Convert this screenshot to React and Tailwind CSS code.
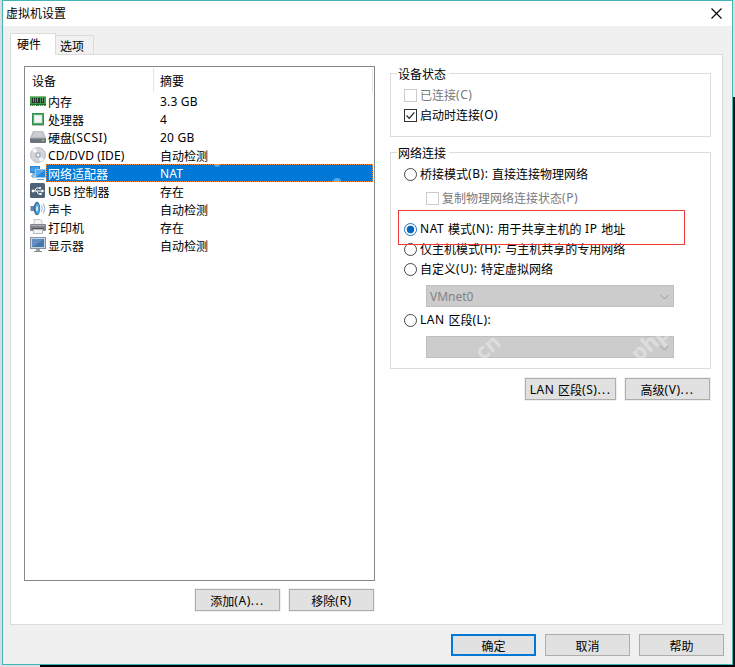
import clsx from 'clsx';

const MemoryIcon = () => (
  <svg className="h-4 w-4" viewBox="0 0 16 16" shapeRendering="crispEdges">
    <rect x="0" y="3" width="16" height="10" fill="#3f9a4a" />
    <rect x="0" y="3" width="16" height="1" fill="#7ec07c" />
    <rect x="2" y="5" width="3" height="5" fill="#26302b" />
    <rect x="6" y="5" width="4" height="5" fill="#26302b" />
    <rect x="11" y="5" width="3" height="5" fill="#26302b" />
    <path d="M3 5h1v4H3zM7 5h1v4H7zM12 5h1v4h-1z" fill="#7d8a82" />
    <rect x="0" y="11" width="16" height="1" fill="#1d6a2c" />
    <path d="M1 12h1v1H1zM3 12h1v1H3zM5 12h1v1H5zM9 12h1v1H9zM11 12h1v1h-1zM13 12h1v1h-1z" fill="#d9e5a0" />
  </svg>
);

const CpuIcon = () => (
  <svg className="h-4 w-4" viewBox="0 0 16 16" shapeRendering="crispEdges">
    <rect x="2" y="2" width="12" height="12" fill="#2f8f4e" />
    <rect x="3" y="3" width="10" height="10" fill="#57ad6c" />
    <rect x="4" y="4" width="8" height="8" fill="#dfe6e1" />
    <rect x="5" y="5" width="6" height="6" fill="#f3f6f4" />
    <rect x="2" y="14" width="12" height="1" fill="#b9c6bd" />
  </svg>
);

const DiskIcon = () => (
  <svg className="h-4 w-4" viewBox="0 0 16 16">
    <path d="M3 2h10l3 7H0z" fill="#b3b7be" />
    <path d="M4 2.500h8l2 5.500H2z" fill="#c9ccd2" />
    <rect x="0" y="9" width="16" height="5" rx="1" fill="#6d737c" />
    <path d="M0 9.500h16" stroke="#90969e" />
    <rect x="12" y="11" width="2" height="1" fill="#8ff06a" />
  </svg>
);

const DiscIcon = () => (
  <svg className="h-4 w-4" viewBox="0 0 16 16">
    <circle cx="8" cy="8" r="7.500" fill="#d3d5d9" stroke="#aeb1b6" strokeWidth="0.800" />
    <path d="M8 8L2 3.400A7 7 0 0 1 6 1.200z" fill="#f7f8fa" />
    <path d="M8 8l6 4.600a7 7 0 0 1-4 2.200z" fill="#f7f8fa" />
    <circle cx="8" cy="8" r="3.200" fill="#b3c0ce" />
    <circle cx="8" cy="8" r="1.700" fill="#ffffff" stroke="#8d949e" strokeWidth="0.600" />
  </svg>
);

const NetworkIcon = () => (
  <svg className="h-4 w-4" viewBox="0 0 16 16">
    <rect x="0" y="1" width="10" height="7" fill="#2f84cc" />
    <rect x="1" y="2" width="8" height="5" fill="#3f9fe8" />
    <path d="M3 8v1h2v1H2v2h3" fill="none" stroke="#5590c4" />
    <rect x="5" y="4" width="11" height="9" fill="#9cc8ee" />
    <rect x="6" y="5" width="9" height="7" fill="#2a86d6" />
    <path d="M6 12V5h9z" fill="#4fa9ee" />
    <path d="M7 14.500h7" stroke="#6f9fc8" />
  </svg>
);

const UsbIcon = () => (
  <svg className="h-4 w-4" viewBox="0 0 16 16">
    <rect x="0" y="0" width="15" height="15" rx="1.500" fill="#4d6277" />
    <path d="M2 8h10M4.500 8l2-3h3M6.500 8l2 3h2" fill="none" stroke="#ffffff" />
    <circle cx="3" cy="8" r="1.400" fill="#ffffff" />
    <path d="M11.500 6.200l3 1.800-3 1.800z" fill="#ffffff" />
    <circle cx="10" cy="5" r="1.100" fill="#ffffff" />
    <rect x="9.500" y="10" width="2" height="2" fill="#ffffff" />
  </svg>
);

const SoundIcon = () => (
  <svg className="h-4 w-4" viewBox="0 0 16 16">
    <path d="M0.500 5h3L8 1v13l-4.500-4h-3z" fill="#5f83ab" />
    <ellipse cx="7" cy="7.500" rx="3.200" ry="6.800" fill="#3a6795" />
    <ellipse cx="7.400" cy="7.500" rx="2.200" ry="5.500" fill="#4ba3e2" />
    <ellipse cx="7" cy="7.500" rx="1.100" ry="2.800" fill="#c8e6fa" />
    <path d="M11.500 4.500q1.800 3 0 6M13.300 2.500q3 5 0 10" fill="none" stroke="#93afca" />
  </svg>
);

const PrinterIcon = () => (
  <svg className="h-4 w-4" viewBox="0 0 16 16">
    <path d="M4 6V0.500h6.500l1.500 1.500v4z" fill="#f4f4f6" stroke="#b4b7bd" strokeWidth="0.800" />
    <rect x="0" y="5" width="16" height="7" rx="1" fill="#81858e" />
    <path d="M1 6.500h14" stroke="#a9adb5" />
    <path d="M2 9.500h12" stroke="#4e535c" />
    <rect x="3" y="10" width="10" height="5" fill="#b4b7bd" />
    <rect x="4" y="11" width="8" height="3" fill="#f4f4f6" />
  </svg>
);

const DisplayIcon = () => (
  <svg className="h-4 w-4" viewBox="0 0 16 16" shapeRendering="crispEdges">
    <rect x="0" y="0" width="16" height="12" fill="#8494a6" />
    <rect x="1" y="1" width="14" height="10" fill="#c9d3de" />
    <rect x="2" y="2" width="12" height="8" fill="#4678b0" />
    <path d="M2 10V2h12z" fill="#628fc0" />
    <rect x="6" y="12" width="4" height="2" fill="#9aa3ae" />
    <rect x="4" y="14" width="8" height="1" fill="#858e99" />
  </svg>
);

const devices = [
  { name: '内存', summary: '3.3 GB', Icon: MemoryIcon },
  { name: '处理器', summary: '4', Icon: CpuIcon },
  { name: '硬盘(SCSI)', summary: '20 GB', Icon: DiskIcon },
  { name: 'CD/DVD (IDE)', summary: '自动检测', Icon: DiscIcon, tracking: 'tracking-[0.1px]' },
  { name: '网络适配器', summary: 'NAT', Icon: NetworkIcon, selected: true },
  { name: 'USB 控制器', summary: '存在', Icon: UsbIcon, tracking: 'tracking-[-0.2px]' },
  { name: '声卡', summary: '自动检测', Icon: SoundIcon },
  { name: '打印机', summary: '存在', Icon: PrinterIcon },
  { name: '显示器', summary: '自动检测', Icon: DisplayIcon },
];

// Chinese runs sit a pixel lower than the Latin ones, Latin runs are spaced wider
const Text = ({ children, tracking = 'tracking-[0.55px]', className }) => (
  <span className={clsx('whitespace-pre', className)}>
    {children.split(/([\u4e00-\u9fff]+|\.{3})/).filter(Boolean).map((part, i) => (
      <span
        key={i}
        className={clsx(
          /[\u4e00-\u9fff]/.test(part) ? 'align-[-1px]' : part === '...' ? 'tracking-[1.4px]' : tracking
        )}
      >
        {part}
      </span>
    ))}
  </span>
);

const Button = ({ children, primary, className }) => (
  <button
    type="button"
    className={clsx(
      'flex h-[22px] items-center justify-center bg-[#e1e1e1] pt-0.5',
      primary ? 'border-2 border-[#0078d7]' : 'border border-[#adadad] ring-1 ring-[#f0f0f0]',
      className
    )}
  >
    <Text>{children}</Text>
  </button>
);

const Checkbox = ({ label, checked, disabled, className }) => (
  <label className={clsx('flex h-[13px] items-center gap-[3px]', disabled && 'text-[#7a7a7a]', className)}>
    <span className={clsx('h-[13px] w-[13px] border bg-white', disabled ? 'border-[#cccccc]' : 'border-[#333333]')}>
      {checked && (
        <svg className="block h-[11px] w-[11px]" viewBox="0 0 11 11">
          <path d="M1.500 5.500l2.800 2.800 5-6" fill="none" stroke="#222222" strokeWidth="1.200" />
        </svg>
      )}
    </span>
    <Text>{label}</Text>
  </label>
);

const Radio = ({ label, checked, className }) => (
  <label className={clsx('flex h-[13px] items-center gap-[3px]', className)}>
    <svg className="h-[13px] w-[13px]" viewBox="0 0 13 13">
      <circle cx="6.500" cy="6.500" r="6" fill="#ffffff" stroke={checked ? '#0067b8' : '#333333'} strokeWidth="0.900" />
      {checked && <circle cx="6.500" cy="6.500" r="3.700" fill="#0067b8" />}
    </svg>
    <Text>{label}</Text>
  </label>
);

const Combo = ({ value, className }) => (
  <div
    className={clsx(
      'ml-[22px] flex h-[22px] w-[248px] items-center justify-between border border-[#bfbfbf] bg-[#cccccc] pt-px pr-1 pl-[3px] text-[#838383]',
      className
    )}
  >
    <span>{value}</span>
    <svg className="h-2 w-[9px]" viewBox="0 0 9 8">
      <path d="M0.500 2l4 4 4-4" fill="none" stroke="#999999" />
    </svg>
  </div>
);

const GroupBox = ({ title, className, children }) => (
  <fieldset className={clsx('relative w-[321px] border border-[#dcdcdc] pl-[13px]', className)}>
    <div className="absolute -top-2 left-[6px] bg-white pr-[3px] pl-px leading-4">
      <Text>{title}</Text>
    </div>
    {children}
  </fieldset>
);

const App = () => {
  return (
    <div className="relative h-[667px] w-[735px] overflow-hidden bg-[#dedddd] font-['Noto_Sans','Noto_Sans_CJK_SC',sans-serif] text-[12px] leading-[18px] whitespace-nowrap text-black">
      {/* Desktop showing behind the window */}
      <div className="absolute top-[97px] right-0 bottom-0 w-2 bg-[#101414]" />
      <div className="absolute right-0 bottom-0 left-10 h-0.5 bg-black" />

      <div className="relative ml-0.5 flex h-[665px] w-[731px] flex-col border border-[#42b5b8] bg-[#f0f0f0]">
        {/* Title bar */}
        <div className="flex h-[25px] shrink-0 items-center justify-between bg-white pr-[10px] pl-[3px]">
          <span>虚拟机设置</span>
          <svg className="mb-px h-[11px] w-[11px]" viewBox="0 0 11 11">
            <path d="M0.500 0.500l10 10M10.500 0.500l-10 10" stroke="#000000" strokeWidth="1.100" />
          </svg>
        </div>

        {/* Tabs */}
        <div className="relative z-10 mt-[7px] -mb-px ml-[7px] flex h-[22px] shrink-0 items-end">
          <div className="h-[22px] w-[46px] border border-b-0 border-[#dcdcdc] bg-white pt-0.5 pl-[6px]">硬件</div>
          <div className="-ml-px h-5 w-[39px] border border-[#dcdcdc] pt-px pl-1 leading-5">选项</div>
        </div>

        {/* Tab page */}
        <div className="ml-[7px] flex h-[571px] w-[713px] shrink-0 border border-[#dcdcdc] bg-white">
          <div className="ml-[13px] flex w-[351px] flex-col pt-[11px]">
            <div className="h-[515px] border border-[#828790]">
              <div className="flex h-[25px] items-stretch pt-px pr-px">
                <div className="w-[129px] border-r border-[#e5e5e5] pt-[5px] pl-[7px]">设备</div>
                <div className="flex-1 border-r border-[#e5e5e5] pt-[5px] pl-[6px]">摘要</div>
              </div>
              {devices.map(({ name, summary, Icon, selected, tracking }) => (
                <div key={name} className="flex h-[18px] pr-px pl-[5px]">
                  <div className="mt-px w-4">
                    <Icon />
                  </div>
                  <div
                    className={clsx(
                      'flex flex-1 pl-0.5 leading-5',
                      selected && 'bg-[#0078d7] text-white outline-1 -outline-offset-1 outline-[#ff8728] outline-dotted'
                    )}
                  >
                    <Text tracking={tracking} className="w-28">{name}</Text>
                    <Text tracking="tracking-[0.2px]">{summary}</Text>
                  </div>
                </div>
              ))}
            </div>
            <div className="mt-2 flex justify-end gap-[9px] pr-px">
              <Button className="w-[85px]">添加(A)...</Button>
              <Button className="w-[85px]">移除(R)</Button>
            </div>
          </div>

          <div className="ml-[15px] w-[321px] pt-[18px]">
            <GroupBox title="设备状态" className="h-16 pt-[15px]">
              <Checkbox label="已连接(C)" disabled />
              <Checkbox label="启动时连接(O)" checked className="mt-[7px]" />
            </GroupBox>

            <GroupBox title="网络连接" className="mt-[15px] h-[217px] pt-[15px]">
              <Radio label="桥接模式(B): 直接连接物理网络" />
              <Checkbox label="复制物理网络连接状态(P)" disabled className="mt-[11px] ml-[22px]" />
              <Radio label="NAT 模式(N): 用于共享主机的 IP 地址" checked className="mt-[18px]" />
              <Radio label="仅主机模式(H): 与主机共享的专用网络" className="mt-[7px]" />
              <Radio label="自定义(U): 特定虚拟网络" className="mt-[7px]" />
              <Combo value="VMnet0" className="mt-[9px]" />
              <Radio label="LAN 区段(L):" className="mt-[7px]" />
              <Combo value="" className="mt-[9px]" />
              {/* Highlight around the NAT option */}
              <div className="absolute top-[57px] left-[7px] h-[35px] w-[287px] border border-[#f03a3a]" />
            </GroupBox>

            <div className="mt-[9px] flex justify-end gap-[9px] pr-px">
              <Button className="w-[91px]">LAN 区段(S)...</Button>
              <Button className="w-[85px]">高级(V)...</Button>
            </div>
          </div>
        </div>

        {/* Dialog buttons */}
        <div className="mt-[9px] mr-2 flex justify-end gap-[9px]">
          <Button primary className="w-[85px]">确定</Button>
          <Button className="w-[85px]">取消</Button>
          <Button className="w-[85px]">帮助</Button>
        </div>
      </div>

      {/* Watermark */}
      <div className="pointer-events-none absolute top-[332px] left-[474px] -rotate-40 text-[22px] leading-7 font-bold text-white/35">cn</div>
      <div className="pointer-events-none absolute top-[328px] left-[628px] -rotate-40 text-[22px] leading-7 font-bold text-white/35">php</div>
      <div className="pointer-events-none absolute top-[178px] left-[333px] h-1 w-2 rounded-t-full bg-white/35" />
      <div className="pointer-events-none absolute top-[164px] left-[214px] h-[3px] w-1.5 rounded-b-full bg-white/35" />
    </div>
  );
};

export default App;
